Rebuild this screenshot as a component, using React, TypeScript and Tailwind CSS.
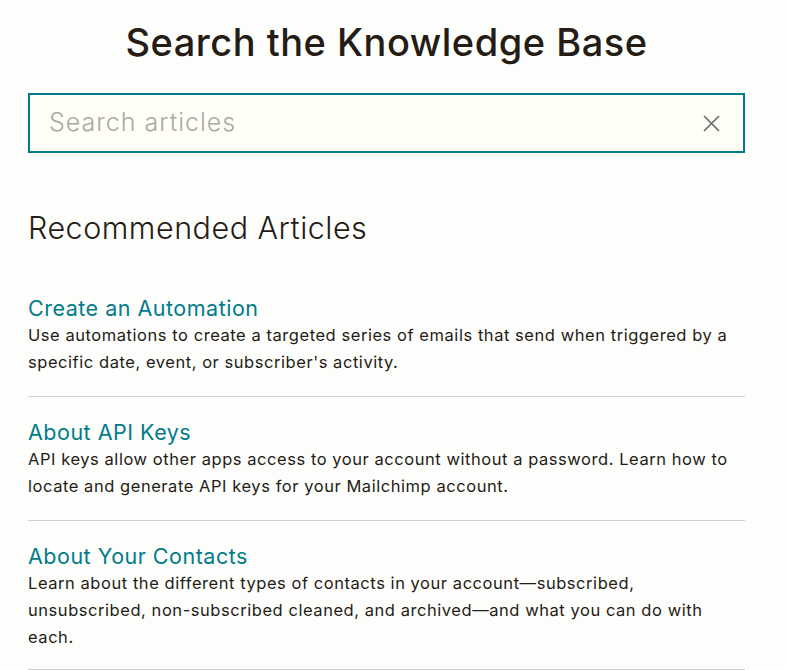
const articles = [
  {
    title: 'Create an Automation',
    description:
      "Use automations to create a targeted series of emails that send when triggered by a specific date, event, or subscriber's activity.",
  },
  {
    title: 'About API Keys',
    description:
      'API keys allow other apps access to your account without a password. Learn how to locate and generate API keys for your Mailchimp account.',
  },
  {
    title: 'About Your Contacts',
    description:
      'Learn about the different types of contacts in your account—subscribed, unsubscribed, non-subscribed cleaned, and archived—and what you can do with each.',
  },
];

export default function App() {
  return (
    <div className="min-h-screen bg-[#fdfdfc] font-['Inter',sans-serif] text-[#241c15]">
      <div className="ml-[28px] w-[717px] pt-[18px]">
        {/* Header */}
        <h1 className="text-center text-[38px] font-medium leading-[48px] tracking-[0.5px]">
          Search the Knowledge Base
        </h1>

        {/* Search box */}
        <div className="mt-[27px] flex h-[60px] items-center border-2 border-[#007c89] bg-[#fffff8] pl-[19px] pr-[23px]">
          <input
            type="text"
            placeholder="Search articles"
            className="flex-1 bg-transparent text-[25px] font-light tracking-[1px] text-[#241c15] placeholder:text-[#a9a9a4] outline-none"
          />
          <svg width="17" height="17" viewBox="0 0 17 17" className="text-[#6b6b6b]">
            <path d="M1 1L16 16M16 1L1 16" stroke="currentColor" strokeWidth="1.7" fill="none" />
          </svg>
        </div>

        {/* Recommended */}
        <h2 className="mt-[57px] text-[30.5px] font-light leading-[36px] tracking-[0.5px]">
          Recommended Articles
        </h2>

        <div className="mt-[48px]">
          {articles.map((article, i) => (
            <div
              key={article.title}
              className={`border-b border-[#cfcfcf] ${i === 0 ? 'pb-[20px]' : i === articles.length - 1 ? 'pt-[21px] pb-[18px]' : 'pt-[21px] pb-[20px]'}`}
            >
              <a href="#" className="block text-[21.5px] leading-[28px] tracking-[0.5px] text-[#007c89]">
                {article.title}
              </a>
              <p className="text-[16.5px] leading-[27px] tracking-[0.55px]">{article.description}</p>
            </div>
          ))}
        </div>
      </div>
    </div>
  );
}
